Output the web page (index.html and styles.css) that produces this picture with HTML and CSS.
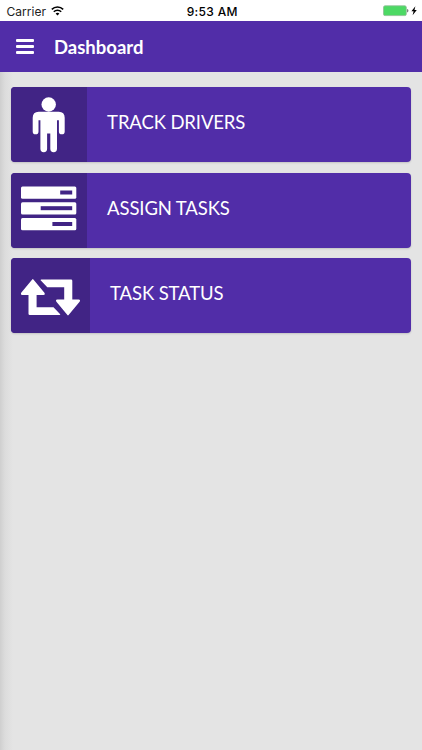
FILE: index.html
```html
<!DOCTYPE html>
<html>
<head>
<meta charset="utf-8" />
<title>Dashboard</title>
<link rel="stylesheet" href="styles.css">
</head>

<body>
<div class="status">
   <div class="carrier">Carrier
     <svg class="wifi" width="13" height="10" viewBox="0 0 13 10"><g fill="none" stroke="#000" stroke-width="1.6"><path d="M.8 3.4a8.1 8.1 0 0 1 11.4 0"/><path d="M2.8 5.8a5.2 5.2 0 0 1 7.4 0"/></g><path d="M6.5 9.6L4.6 7.6a2.8 2.8 0 0 1 3.8 0z"/></svg>
   </div>
   <div class="time">9:53 AM</div>
   <div class="power">
     <svg width="35" height="12" viewBox="0 0 35 12"><rect x=".5" y=".8" width="22.8" height="9.8" rx="1.5" fill="#4cd964" stroke="#8fbd96" stroke-width=".8"/><path d="M24.4 4.1c1.2.3 1.2 3.1 0 3.4z" fill="#333"/><path d="M32.4 1.3L28.4 6.3h2.2l-1 4 4.2-5.4h-2.3z"/></svg>
   </div>
</div>

<div class="header">
   <a href="#" class="menu"><span></span><span></span><span></span></a>
   <h1>Dashboard</h1>
</div>

<div class="content">
   <a href="#" class="item">
     <span class="icon">
       <svg width="56" height="75" viewBox="0 0 56 75"><circle cx="27.7" cy="17.5" r="7.2"/><path d="M17.7 24.7h20q6 0 6 6V44.4a2.9 2.9 0 0 1-5.8 0V33.3h-1.9V61.8a3.35 3.35 0 0 1-6.7 0V46.5h-3.2V61.8a3.35 3.35 0 0 1-6.7 0V33.3h-1.9V44.4a2.9 2.9 0 0 1-5.8 0V30.7q0-6 6-6z"/></svg>
     </span>
     <span class="text">TRACK DRIVERS</span>
   </a>
   <a href="#" class="item">
     <span class="icon">
       <svg width="56" height="75" viewBox="0 0 56 75"><rect x="0" y="13.5" width="55.3" height="12.2" rx="1.5"/><rect x="0" y="29.2" width="55.3" height="12.2" rx="1.5"/><rect x="0" y="45" width="55.3" height="12.2" rx="1.5"/><g class="bars"><rect x="39.2" y="17.5" width="12" height="4"/><rect x="19.7" y="33.2" width="31.5" height="4"/><rect x="31.4" y="49" width="19.8" height="4"/></g></svg>
     </span>
     <span class="text">ASSIGN TASKS</span>
   </a>
   <a href="#" class="item">
     <span class="icon">
       <svg width="59" height="75" viewBox="0 0 59 75"><path d="M12.4 21.4L23.4 34.7q1.2 2.1-1 2.3H15.6V49.3H32.5L39.2 56.2q.4.8-.6.8H8.8q-1.3 0-1.3-1.3V37H1.2q-2.2-.2-1-2.3L11.2 21.4q.6-.6 1.2 0z"/><path d="M46.4 57.1L35.4 43.8q-1.2-2.1 1-2.3H43.2V29.2H26.3L19.6 22.3q-.4-.8.6-.8H50q1.3 0 1.3 1.3V41.5H57.6q2.2.2 1 2.3L47.6 57.1q-.6.6-1.2 0z"/></svg>
     </span>
     <span class="text">TASK STATUS</span>
   </a>
</div>
</body>
</html>
```

FILE: styles.css
```css
*{padding:0;margin:0;box-sizing:border-box;}
body{background:#e4e4e4;font-family:Lato,sans-serif;}
a{text-decoration:none;color:#fff;}
svg{display:block;}

/* status bar */
.status{display:grid;grid-template-columns:1fr auto 1fr;align-items:center;height:21px;padding:1px 4px 0 6.5px;background:#fff;font-family:Inter,sans-serif;font-size:12px;color:#222;}
.carrier{display:flex;align-items:center;gap:5px;letter-spacing:.05px;}
.wifi{margin-top:-1px;}
.time{font-weight:500;color:#000;letter-spacing:.35px;}
.power{display:flex;justify-content:flex-end;}

/* header */
.header{display:flex;align-items:center;height:50.5px;padding:0 15.5px;background:#512da8;color:#fff;}
.menu{display:flex;flex-direction:column;gap:3px;width:18.5px;margin-right:20px;padding-top:1px;}
.menu span{height:3px;border-radius:1px;background:#fff;}
.header h1{font-size:18.5px;line-height:22px;font-weight:bold;padding-top:1px;}

/* list */
.content{display:flex;flex-direction:column;gap:10.5px;min-height:678.5px;padding:15.5px 11px 0 10.5px;background:linear-gradient(to right,#cfcfcf,#dcdcdc 5px,#e4e4e4 13px);}
.item{display:flex;height:75px;border-radius:4px;overflow:hidden;background:#512da8;box-shadow:0 1px 2px rgba(0,0,0,.15);}
.icon{padding:0 10.3px;background:#412485;}
.icon svg{fill:#fff;}
.icon .bars{fill:#412485;}
.text{padding:23px 20px 0;font-size:18.5px;line-height:24px;letter-spacing:-.12px;}
```
